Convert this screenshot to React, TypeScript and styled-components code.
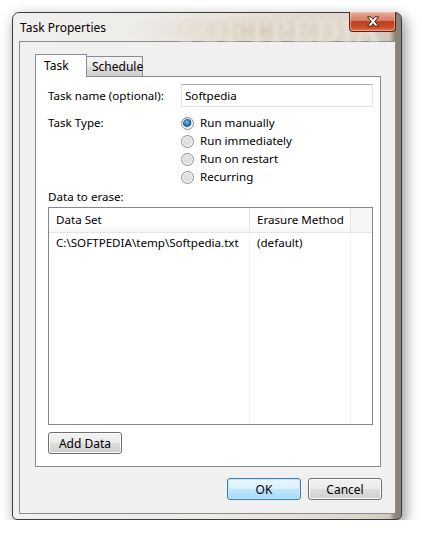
import React from "react";
import styled, { createGlobalStyle, css } from "styled-components";

const GlobalStyle = createGlobalStyle`
  html, body {
    margin: 0;
    padding: 0;
    background: #ffffff;
  }
  body {
    font-family: "Segoe UI", "Noto Sans", "Open Sans", sans-serif;
    font-size: 11.6px;
    color: #000;
  }
`;

const radioOptions = [
  { label: "Run manually", checked: true },
  { label: "Run immediately", checked: false },
  { label: "Run on restart", checked: false },
  { label: "Recurring", checked: false },
];

const rows = [{ path: "C:\\SOFTPEDIA\\temp\\Softpedia.txt", method: "(default)" }];

const CloseIcon = () => (
  <svg width="14" height="11" viewBox="0 0 14 11">
    <path
      d="M1.5 0.8 L5 0.8 L7 3.4 L9 0.8 L12.5 0.8 L8.8 5.5 L12.5 10.2 L9 10.2 L7 7.6 L5 10.2 L1.5 10.2 L5.2 5.5 Z"
      fill="#ffffff"
      stroke="#4a1a12"
      strokeWidth="1"
      strokeLinejoin="round"
    />
  </svg>
);

const App = () => {
  return (
    <>
      <GlobalStyle />
      <Window>
        <TitleBar>
          <Watermark>SOFTPEDIA</Watermark>
          <Title>Task Properties</Title>
          <CloseButton>
            <CloseIcon />
          </CloseButton>
        </TitleBar>
        <Client>
          <TabStrip>
            <Tab active>Task</Tab>
            <Tab>Schedule</Tab>
          </TabStrip>
          <TabPanel>
            <FormGrid>
              <FieldLabel>Task name (optional):</FieldLabel>
              <TextBox>Softpedia</TextBox>
              <FieldLabel top>Task Type:</FieldLabel>
              <RadioList>
                {radioOptions.map((o) => (
                  <RadioRow key={o.label}>
                    <RadioCircle checked={o.checked} />
                    {o.label}
                  </RadioRow>
                ))}
              </RadioList>
            </FormGrid>
            <SectionLabel>Data to erase:</SectionLabel>
            <ListView>
              <ListHeader>
                <HeaderCell width={201}>Data Set</HeaderCell>
                <HeaderCell width={101}>Erasure Method</HeaderCell>
                <HeaderFiller />
              </ListHeader>
              <ListBody>
                {rows.map((r) => (
                  <ListRow key={r.path}>
                    <Cell width={201}>{r.path}</Cell>
                    <Cell width={101}>{r.method}</Cell>
                  </ListRow>
                ))}
                <ColumnGuides>
                  <Guide width={201} />
                  <Guide width={101} />
                </ColumnGuides>
              </ListBody>
            </ListView>
            <PanelFooter>
              <Button>Add Data</Button>
            </PanelFooter>
          </TabPanel>
          <DialogButtons>
            <Button primary>OK</Button>
            <Button>Cancel</Button>
          </DialogButtons>
        </Client>
      </Window>
    </>
  );
};

export default App;

const Window = styled.div`
  box-sizing: border-box;
  margin: 12px 0 0 12px;
  width: 390px;
  height: 508px;
  border: 1px solid #3b3b3b;
  border-radius: 7px 7px 5px 5px;
  padding: 0 5px 5px 6px;
  display: flex;
  flex-direction: column;
  background: linear-gradient(
    to right,
    #f1f0ee 0%,
    #eceae7 55%,
    #dcd6ce 90%,
    #cfc7bd 97%,
    #8d8279 98.5%,
    #8d8279 100%
  );
  box-shadow: 3px 5px 14px rgba(0, 0, 0, 0.45);
`;

const TitleBar = styled.div`
  position: relative;
  height: 28px;
  display: flex;
  align-items: flex-start;
  justify-content: space-between;
  background: radial-gradient(
    ellipse 130px 24px at 63% 60%,
    rgba(205, 188, 165, 0.55) 0%,
    rgba(222, 210, 192, 0.35) 60%,
    rgba(255, 255, 255, 0) 100%
  );
`;

const Watermark = styled.span`
  position: absolute;
  left: 158px;
  top: 1px;
  font-family: "Liberation Serif", "DejaVu Serif", serif;
  font-weight: bold;
  font-size: 34px;
  line-height: 34px;
  letter-spacing: 1px;
  color: rgba(232, 224, 214, 0.8);
  filter: blur(1.2px);
  pointer-events: none;
`;

const Title = styled.span`
  position: relative;
  padding: 7px 0 0 1px;
  line-height: 16px;
  font-size: 12px;
  color: #000;
`;

const CloseButton = styled.div`
  position: relative;
  width: 47px;
  height: 20px;
  margin-top: -1px;
  box-sizing: border-box;
  border: 1px solid #5b2116;
  border-top: none;
  border-radius: 0 0 4px 4px;
  display: flex;
  align-items: center;
  justify-content: center;
  background: linear-gradient(
    to bottom,
    #e9ab9a 0%,
    #d97c66 45%,
    #c2401f 50%,
    #c84b2c 80%,
    #de7a52 100%
  );
  box-shadow: inset 0 0 0 1px rgba(255, 210, 200, 0.5);
`;

const Client = styled.div`
  flex: 1;
  border: 1px solid #8c8c8c;
  background: #f0f0f0;
  padding: 12px 14px 13px 15px;
  display: flex;
  flex-direction: column;
`;

const TabStrip = styled.div`
  height: 22px;
  display: flex;
  align-items: flex-end;
`;

const Tab = styled.div<{ active?: boolean }>`
  box-sizing: border-box;
  border: 1px solid #898c95;
  border-bottom: none;
  display: flex;
  align-items: center;
  font-size: 12px;
  ${(p) =>
    p.active
      ? css`
          height: 23px;
          width: 52px;
          margin-bottom: -1px;
          padding: 0 0 2px 8px;
          background: #ffffff;
          position: relative;
          z-index: 1;
        `
      : css`
          height: 20px;
          width: 57px;
          margin-left: -1px;
          padding: 0 0 0 5px;
          background: linear-gradient(to bottom, #f3f3f3 0%, #ebebeb 50%, #dddddd 51%, #cfcfcf 100%);
        `}
`;

const TabPanel = styled.div`
  box-sizing: border-box;
  height: 391px;
  border: 1px solid #898c95;
  background: #ffffff;
  padding: 7px 7px 12px 12px;
  display: flex;
  flex-direction: column;
`;

const FormGrid = styled.div`
  display: grid;
  grid-template-columns: 133px 192px;
  row-gap: 7px;
  align-items: center;
`;

const FieldLabel = styled.div<{ top?: boolean }>`
  line-height: 18px;
  align-self: ${(p) => (p.top ? "start" : "center")};
`;

const TextBox = styled.div`
  box-sizing: border-box;
  height: 23px;
  border: 1px solid #e2e3ea;
  border-top-color: #abadb3;
  padding: 0 3px;
  line-height: 21px;
  background: #ffffff;
`;

const RadioList = styled.div`
  display: flex;
  flex-direction: column;
`;

const RadioRow = styled.div`
  height: 18px;
  display: flex;
  align-items: center;
  gap: 6px;
  line-height: 18px;
`;

const RadioCircle = styled.span<{ checked?: boolean }>`
  box-sizing: border-box;
  width: 13px;
  height: 13px;
  border-radius: 50%;
  border: 1px solid #8f8f8f;
  background: ${(p) =>
    p.checked
      ? "radial-gradient(circle at 45% 40%, #7fc1ee 0%, #2a7fc4 30%, #10508f 45%, #e2e2e2 52%, #f8f8f8 100%)"
      : "radial-gradient(circle at 45% 40%, #e6e6e6 0%, #dcdcdc 45%, #f4f4f4 75%, #ffffff 100%)"};
  box-shadow: inset 0 0 0 1px #f5f5f5;
`;

const SectionLabel = styled.div`
  margin-top: 3px;
  line-height: 16px;
  height: 16px;
  margin-bottom: 2px;
`;

const ListView = styled.div`
  box-sizing: border-box;
  height: 218px;
  border: 1px solid #828790;
  background: #ffffff;
  display: flex;
  flex-direction: column;
`;

const ListHeader = styled.div`
  height: 24px;
  display: flex;
  border-bottom: 1px solid #e5e5e5;
  background: linear-gradient(to bottom, #ffffff 0%, #ffffff 60%, #f7f8f9 100%);
`;

const HeaderCell = styled.div<{ width: number }>`
  box-sizing: border-box;
  width: ${(p) => p.width}px;
  border-right: 1px solid #e5e5e5;
  padding-left: 7px;
  line-height: 24px;
`;

const HeaderFiller = styled.div`
  flex: 1;
  background: #f6f6f6;
`;

const ListBody = styled.div`
  flex: 1;
  display: flex;
  flex-direction: column;
  position: relative;
`;

const ListRow = styled.div`
  height: 18px;
  margin-top: 1px;
  display: flex;
  position: relative;
  z-index: 1;
`;

const Cell = styled.div<{ width: number }>`
  box-sizing: border-box;
  width: ${(p) => p.width}px;
  padding-left: 7px;
  line-height: 18px;
  white-space: nowrap;
`;

const ColumnGuides = styled.div`
  position: absolute;
  inset: 0;
  display: flex;
  pointer-events: none;
`;

const Guide = styled.div<{ width: number }>`
  box-sizing: border-box;
  width: ${(p) => p.width}px;
  border-right: 1px solid #f0f0f0;
`;

const PanelFooter = styled.div`
  margin-top: 7px;
  display: flex;
`;

const Button = styled.button<{ primary?: boolean }>`
  box-sizing: border-box;
  width: 74px;
  height: 22px;
  padding: 0;
  font-family: inherit;
  font-size: 12px;
  color: #000;
  border-radius: 3px;
  border: 1px solid ${(p) => (p.primary ? "#3c7fb1" : "#707070")};
  background: ${(p) =>
    p.primary
      ? "linear-gradient(to bottom, #eaf6fd 0%, #d9f0fc 50%, #bee6fd 51%, #a7d9f5 100%)"
      : "linear-gradient(to bottom, #f2f2f2 0%, #ebebeb 50%, #dddddd 51%, #cfcfcf 100%)"};
  box-shadow: inset 0 0 0 1px ${(p) => (p.primary ? "#c4e5f6" : "#fbfbfb")};
`;

const DialogButtons = styled.div`
  margin-top: 11px;
  margin-right: -1px;
  display: flex;
  justify-content: flex-end;
  gap: 7px;
`;
